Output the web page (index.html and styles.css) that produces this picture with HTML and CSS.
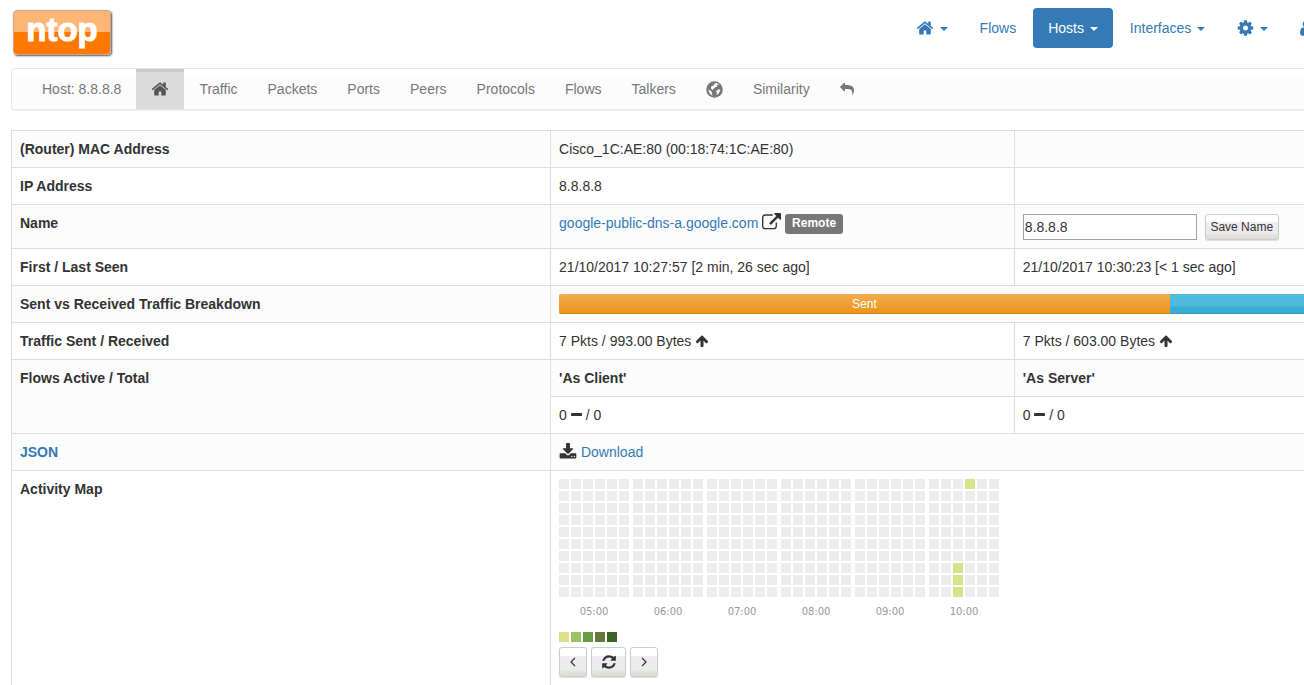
FILE: index.html
```html
<!DOCTYPE html>
<html lang="en">
<head>
<meta charset="utf-8">
<title>ntop</title>
<link rel="stylesheet" href="styles.css">
</head>
<body>
<svg class="sprite" aria-hidden="true">
  <symbol id="home" viewBox="64 0 1664 1792"><path d="M1472 992v480q0 26-19 45t-45 19h-384v-384h-256v384h-384q-26 0-45-19t-19-45v-480q0-1 .5-3t.5-3l575-474 575 474q1 2 1 6zm223-69l-62 74q-8 9-21 11h-3q-13 0-21-7l-692-577-692 577q-12 8-24 7-13-2-21-11l-62-74q-8-10-7-23.500t11-21.500l719-599q32-26 76-26t76 26l244 204v-195q0-14 9-23t23-9h192q14 0 23 9t9 23v408l219 182q10 8 11 21.500t-7 23.500z"/></symbol>
  <symbol id="cog" viewBox="128 0 1536 1792"><path d="M1152 896q0-106-75-181t-181-75-181 75-75 181 75 181 181 75 181-75 75-181zm512-109v222q0 12-8 23t-20 13l-185 28q-19 54-39 91 35 50 107 138 10 12 10 25t-9 23q-27 37-99 108t-94 71q-12 0-26-9l-138-108q-44 23-91 38-16 136-29 186-7 28-36 28h-222q-14 0-24.500-8.500t-11.500-21.500l-28-184q-49-16-90-37l-141 107q-10 9-25 9-14 0-25-11-126-114-165-168-7-10-7-23 0-12 8-23 15-21 51-66.500t54-70.500q-27-50-41-99l-183-27q-13-2-21-12.500t-8-23.500v-222q0-12 8-23t19-13l186-28q14-46 39-92-40-57-107-138-10-12-10-24 0-10 9-23 26-36 98.500-107.500t94.500-71.500q13 0 26 10l138 107q44-23 91-38 16-136 29-186 7-28 36-28h222q14 0 24.500 8.500t11.500 21.500l28 184q49 16 90 37l142-107q9-9 24-9 13 0 25 10 129 119 165 170 7 8 7 22 0 12-8 23-15 21-51 66.500t-54 70.500q26 50 41 98l183 28q13 2 21 12.500t8 23.500z"/></symbol>
  <symbol id="user" viewBox="256 0 1280 1792"><path d="M1536 1399q0 109-62.500 187t-150.500 78h-854q-88 0-150.500-78t-62.500-187q0-85 8.500-160.500t31.500-152 58.500-131 94-89 134.500-34.500q131 128 313 128t313-128q76 0 134.500 34.500t94 89 58.500 131 31.500 152 8.500 160.500zm-256-887q0 159-112.500 271.500t-271.500 112.500-271.500-112.500-112.500-271.500 112.500-271.500 271.500-112.500 271.500 112.500 112.500 271.500z"/></symbol>
  <symbol id="reply" viewBox="0 0 1792 1792"><path transform="matrix(-1 0 0 1 1792 0)" d="M1792 640q0 26-19 45l-512 512q-19 19-45 19t-45-19-19-45v-256h-224q-98 0-175.500 6t-154 21.500-133 42.500-105.500 69.500-80 101-48.500 138.500-17.500 181q0 55 5 123 0 6 2.500 23.500t2.500 26.500q0 15-8.500 25t-23.500 10q-16 0-28-17-7-9-13-22t-13.500-30-10.500-24q-127-285-127-451 0-199 53-333 162-403 875-403h224v-256q0-26 19-45t45-19 45 19l512 512q19 19 19 45z"/></symbol>
  <symbol id="globe" viewBox="0 0 17 17"><circle cx="8.500" cy="8.500" r="8.300"/><path fill="#fcfcfc" d="M10.300 2l2.300 1 .3 1-1.500-.5-.8.8 1 .6-.5.8-1.500.3-1.400 1.500-1.300.2.300 1.200-1.400-.5-.9-1.500.7-1.900L8 4.400l.4-1.600zM2 7.600l1.400 1.600 1.400.7 1.200 1.200-.3 1.300.9 2.300-2-1.200-1.500-2.200zM10.500 9.400l1.400-.2.700-1 1.100.2.700 1.500-.9.900-.8 1.600-1.400 1.300-.8-.5.500-1.600-.9-1z"/></symbol>
  <symbol id="external" viewBox="0 0 1792 1792"><path d="M1408 928v320q0 119-84.500 203.500t-203.500 84.500h-832q-119 0-203.500-84.500t-84.500-203.500v-832q0-119 84.500-203.500t203.500-84.500h704q14 0 23 9t9 23v64q0 14-9 23t-23 9h-704q-66 0-113 47t-47 113v832q0 66 47 113t113 47h832q66 0 113-47t47-113v-320q0-14 9-23t23-9h64q14 0 23 9t9 23zm384-864v512q0 26-19 45t-45 19-45-19l-176-176-652 652q-10 10-23 10t-23-10l-114-114q-10-10-10-23t10-23l652-652-176-176q-19-19-19-45t19-45 45-19h512q26 0 45 19t19 45z"/></symbol>
  <symbol id="up" viewBox="64 0 1664 1792"><path d="M1675 971q0 51-37 90l-75 75q-38 38-91 38-54 0-90-38l-294-293v704q0 52-37.500 84.500t-90.500 32.500h-128q-53 0-90.500-32.500t-37.500-84.500v-704l-294 293q-36 38-90 38t-90-38l-75-75q-38-38-38-90 0-53 38-91l651-651q35-37 90-37 54 0 91 37l651 651q37 39 37 91z"/></symbol>
  <symbol id="minus" viewBox="192 0 1408 1792"><path d="M1600 736v192q0 40-28 68t-68 28h-1216q-40 0-68-28t-28-68v-192q0-40 28-68t68-28h1216q40 0 68 28t28 68z"/></symbol>
  <symbol id="download" viewBox="64 0 1664 1792"><path d="M1344 1344q0-26-19-45t-45-19-45 19-19 45 19 45 45 19 45-19 19-45zm256 0q0-26-19-45t-45-19-45 19-19 45 19 45 45 19 45-19 19-45zm128-224v320q0 40-28 68t-68 28h-1472q-40 0-68-28t-28-68v-320q0-40 28-68t68-28h465l135 136q58 56 136 56t136-56l136-136h464q40 0 68 28t28 68zm-325-569q17 41-14 70l-448 448q-18 19-45 19t-45-19l-448-448q-31-29-14-70 17-39 59-39h256v-448q0-26 19-45t45-19h256q26 0 45 19t19 45v448h256q42 0 59 39z"/></symbol>
  <symbol id="refresh" viewBox="128 0 1536 1792"><path d="M1639 1056q0 5-1 7-64 268-268 434.500t-478 166.500q-146 0-282.500-55t-243.500-157l-129 129q-19 19-45 19t-45-19-19-45v-448q0-26 19-45t45-19h448q26 0 45 19t19 45-19 45l-137 137q71 66 161 102t187 36q134 0 250-65t186-179q11-17 53-117 8-23 30-23h192q13 0 22.500 9.500t9.500 22.500zm25-800v448q0 26-19 45t-45 19h-448q-26 0-45-19t-19-45 19-45l138-138q-148-137-349-137-134 0-250 65t-186 179q-11 17-53 117-8 23-30 23h-199q-13 0-22.500-9.500t-9.500-22.500v-7q65-268 270-434.500t480-166.500q146 0 284 55.500t245 156.500l130-129q19-19 45-19t45 19 19 45z"/></symbol>
  <symbol id="left" viewBox="0 0 8 10"><path class="chevron" d="M6 1L2 5l4 4"/></symbol>
  <symbol id="right" viewBox="0 0 8 10"><path class="chevron" d="M2 1l4 4-4 4"/></symbol>
</svg>

<header class="masthead">
  <a class="logo" href="#">ntop</a>
  <nav class="pills">
    <a href="#" aria-label="Home"><svg class="icon lg"><use href="#home"/></svg> <b class="caret"></b></a>
    <a href="#">Flows</a>
    <a class="current" href="#">Hosts <b class="caret"></b></a>
    <a href="#">Interfaces <b class="caret"></b></a>
    <a href="#" aria-label="Settings"><svg class="icon cog"><use href="#cog"/></svg> <b class="caret"></b></a>
    <a href="#" aria-label="User"><svg class="icon user"><use href="#user"/></svg> <b class="caret"></b></a>
  </nav>
</header>

<main class="page">
  <nav class="hostbar">
    <a class="host" href="#">Host: 8.8.8.8</a>
    <a class="active" href="#" aria-label="Host home"><svg class="icon lg"><use href="#home"/></svg></a>
    <a href="#">Traffic</a>
    <a href="#">Packets</a>
    <a href="#">Ports</a>
    <a href="#">Peers</a>
    <a href="#">Protocols</a>
    <a href="#">Flows</a>
    <a href="#">Talkers</a>
    <a href="#" aria-label="Map"><svg class="icon globe"><use href="#globe"/></svg></a>
    <a href="#">Similarity</a>
    <a href="#" aria-label="Back"><svg class="icon sm"><use href="#reply"/></svg></a>
  </nav>

  <table class="details">
    <colgroup><col class="col-label"><col class="col-value"><col></colgroup>
    <tbody>
      <tr><th scope="row">(Router) MAC Address</th><td>Cisco_1C:AE:80 (00:18:74:1C:AE:80)</td><td></td></tr>
      <tr><th scope="row">IP Address</th><td>8.8.8.8</td><td></td></tr>
      <tr><th scope="row">Name</th>
        <td><a href="#">google-public-dns-a.google.com</a> <svg class="icon wide"><use href="#external"/></svg> <span class="tag">Remote</span></td>
        <td><form class="rename"><input class="name" type="text" value="8.8.8.8" aria-label="Host name"><button class="btn save" type="button">Save Name</button></form></td></tr>
      <tr><th scope="row">First / Last Seen</th><td>21/10/2017 10:27:57 [2 min, 26 sec ago]</td><td>21/10/2017 10:30:23 [&lt; 1 sec ago]</td></tr>
      <tr><th scope="row">Sent vs Received Traffic Breakdown</th><td colspan="2"><div class="progress"><div class="sent" style="width:62.2%">Sent</div><div class="received"></div></div></td></tr>
      <tr><th scope="row">Traffic Sent / Received</th><td>7 Pkts / 993.00 Bytes <svg class="icon sm up"><use href="#up"/></svg></td><td>7 Pkts / 603.00 Bytes <svg class="icon sm up"><use href="#up"/></svg></td></tr>
      <tr><th scope="row" rowspan="2">Flows Active / Total</th><th scope="col">'As Client'</th><th scope="col">'As Server'</th></tr>
      <tr><td>0 <svg class="icon dash"><use href="#minus"/></svg> / 0</td><td>0 <svg class="icon dash"><use href="#minus"/></svg> / 0</td></tr>
      <tr><th scope="row"><a href="#">JSON</a></th><td colspan="2"><svg class="icon lg"><use href="#download"/></svg> <a href="#">Download</a></td></tr>
      <tr><th scope="row">Activity Map</th>
        <td colspan="2">
          <div class="heatmap" id="heatmap"></div>
          <div class="legend"><i class="l1"></i><i class="l2"></i><i class="l3"></i><i class="l4"></i><i class="l5"></i></div>
          <div class="controls">
            <button class="btn step" type="button" aria-label="Previous"><svg class="arrow"><use href="#left"/></svg></button>
            <button class="btn reload" type="button" aria-label="Refresh"><svg class="spin"><use href="#refresh"/></svg></button>
            <button class="btn step" type="button" aria-label="Next"><svg class="arrow"><use href="#right"/></svg></button>
          </div>
        </td></tr>
    </tbody>
  </table>
</main>
<script src="heatmap.js"></script>
</body>
</html>
```
FILE: heatmap.js
```js
const hours = ["05:00", "06:00", "07:00", "08:00", "09:00", "10:00"];
// Active minutes of each hour, as column * 10 + row.
const activity = { "10:00": [27, 28, 29, 30] };

const map = document.getElementById("heatmap");
for (const hour of hours) {
  const group = document.createElement("div");
  const cells = document.createElement("div");
  const label = document.createElement("span");
  cells.className = "cells";
  label.textContent = hour;
  for (let minute = 0; minute < 60; minute++) {
    const cell = document.createElement("i");
    if ((activity[hour] || []).includes(minute)) cell.className = "l1";
    cells.append(cell);
  }
  group.append(cells, label);
  map.append(group);
}
```
FILE: styles.css
```css
* { box-sizing: border-box; }
html { overflow: hidden; }
body {
  margin: 0;
  overflow: hidden;
  background: #fff;
  color: #333;
  font: 14px/20px "Liberation Sans", Arial, sans-serif;
}
a { color: #337ab7; text-decoration: none; }
.sprite { position: absolute; width: 0; height: 0; }
.chevron { fill: none; stroke: #333; stroke-width: 1.2; }

.icon { display: inline-block; fill: currentColor; vertical-align: -4px; }
.lg { width: 18px; height: 18px; }
.cog { width: 17px; height: 18px; }
.user { width: 13px; height: 18px; }
.wide { width: 19px; height: 19px; }
.globe { width: 17px; height: 17px; }
.sm { width: 14px; height: 14px; vertical-align: -2px; }
.dash { width: 11px; height: 14px; vertical-align: -2px; }

.masthead {
  display: flex;
  justify-content: space-between;
  align-items: flex-start;
  margin-right: -38px;
  padding: 8px 0 0 13px;
}
.logo {
  width: 98px;
  height: 45px;
  margin-top: 2px;
  border: 1px solid #c9a58c;
  border-radius: 4px;
  background: linear-gradient(#ffb574 50%, #ff7800 50%);
  box-shadow: 1px 1px 2px #555;
  color: #fff;
  font-size: 33px;
  font-weight: bold;
  line-height: 38px;
  text-align: center;
  -webkit-text-stroke: 1px #fff;
}
.pills { display: flex; gap: 2px; }
.pills a { padding: 10px 15px; border-radius: 4px; white-space: nowrap; }
.pills .current { background: #337ab7; color: #fff; }
.caret {
  display: inline-block;
  margin-left: 2px;
  border: 4px solid transparent;
  border-top-color: currentColor;
  border-bottom: 0;
  vertical-align: middle;
}

.page { margin: 13px -246px 0 11px; }
.hostbar {
  display: flex;
  margin-bottom: 20px;
  padding-left: 15px;
  border: 1px solid #e9e5ea;
  border-radius: 4px;
  background: linear-gradient(#fff 6px, #fcfcfc 6px);
  box-shadow: 0 1px 1px #f2e8f3;
}
.hostbar a { padding: 10px 15px; color: #777; }
.hostbar .active {
  background: linear-gradient(#c9c9c9 3px, #dbdbdb 3px);
  color: #555;
}

.details { width: 100%; border-collapse: collapse; table-layout: fixed; }
.col-label { width: 35.05%; }
.col-value { width: 30.15%; }
.details th, .details td {
  padding: 8px;
  border: 1px solid #ddd;
  text-align: left;
  vertical-align: top;
}
.details tr:nth-child(odd) > * { background: #fcfcfc; }
.tag {
  display: inline-block;
  height: 20px;
  padding: 0 7px;
  border-radius: 3px;
  background: #777;
  color: #fff;
  font-size: 12px;
  font-weight: bold;
  line-height: 19px;
  vertical-align: middle;
}
.rename { display: flex; gap: 8px; align-items: center; height: 27px; }
.name {
  width: 174px;
  height: 26px;
  padding: 1px;
  border: 1px solid #a0a0a0;
  background: #fff;
  color: #333;
  font: inherit;
}
.btn {
  display: flex;
  align-items: center;
  justify-content: center;
  padding: 0;
  border: 1px solid #ccc;
  border-radius: 3px;
  background: linear-gradient(#fff 28%, #f5e9f5 30%, #f1ebf1 43%, #ececec 45%, #ebebeb 78%, #e6e2dc 84%, #dedcd8);
  box-shadow: 0 1px 1px #ddd;
  color: #333;
  font: 12px/16px "Liberation Sans", Arial, sans-serif;
}
.save { width: 74px; height: 26px; }
.progress {
  display: flex;
  height: 20px;
  border-radius: 2px;
  overflow: hidden;
  color: #fff;
  font-size: 12px;
  line-height: 20px;
  text-align: center;
}
.sent { background: linear-gradient(#f0ad4e, #eb9316); box-shadow: inset 0 -1px #d58512; }
.received { flex: 1; background: linear-gradient(#4ebbdd 60%, #38aed5 65%); box-shadow: inset 0 -1px #2b9bbf; }

.heatmap { display: flex; gap: 4px; }
.cells {
  display: grid;
  grid-template-rows: repeat(10, 10px);
  grid-auto-columns: 10px;
  grid-auto-flow: column;
  gap: 2px;
}
.cells i { background: #ececec; }
.heatmap span {
  display: block;
  margin-top: 5px;
  color: #999;
  font: 10px/20px "DejaVu Sans", Verdana, sans-serif;
  text-align: center;
}
.legend { display: flex; gap: 2px; margin: 10px 0 5px; }
.legend i { width: 10px; height: 10px; }
.cells .l1, .l1 { background: #dae289; }
.l2 { background: #9cc069; }
.l3 { background: #669d45; }
.l4 { background: #637939; }
.l5 { background: #3b6427; }
.controls { display: flex; gap: 4px; }
.controls .btn { height: 30px; }
.controls .step { width: 28px; }
.controls .reload { width: 35px; }
.arrow { width: 8px; height: 10px; }
.spin { width: 14px; height: 16px; fill: #333; }
```
